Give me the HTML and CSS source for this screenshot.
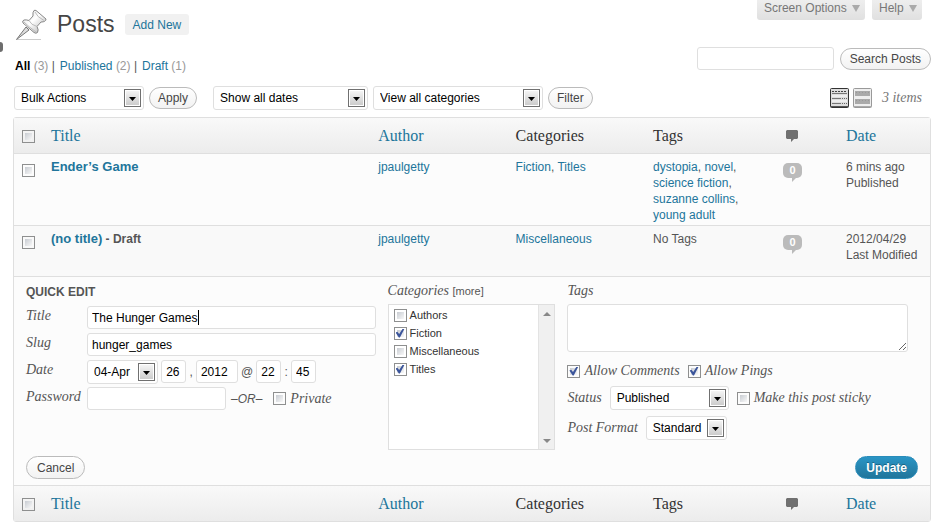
FILE: index.html
```html
<!DOCTYPE html>
<html lang="en">

<head>
  <meta charset="UTF-8">
  <title>Posts</title>
  <link rel="stylesheet" href="styles.css">
</head>

<body>
  <span class="menu-arrow"></span>

  <header class="page-header">
    <svg class="pin" viewBox="0 0 32 32" aria-hidden="true">
      <defs>
        <linearGradient id="pin-fill" x1="0" y1="0" x2="1" y2="1">
          <stop offset="0" stop-color="#ddd" />
          <stop offset="0.45" stop-color="#fff" />
          <stop offset="1" stop-color="#aaa" />
        </linearGradient>
      </defs>
      <path d="M2 31.5 H26" stroke="#ccc" />
      <path d="M11 19 L1.5 31.5 L14 22 Z" fill="#ddd" stroke="#777" />
      <path d="M21 2.5 L31 11 Q31 14 26 14 L22 18.5 Q24 22 22.5 24.5 Q21 26 19 24.5 L8 15 Q7 12.5 9 12 Q11 11.5 14 12.5 L18 8 Q17.5 4 19 2.5 Q20 2 21 2.5 Z" fill="url(#pin-fill)" stroke="#888" />
      <path d="M20 4 Q22 9 29 12.5 M14 12.5 Q16 17 22 18.5 M9 14 Q14 19 21 24" fill="none" stroke="#bbb" />
    </svg>
    <h1>Posts</h1>
    <a class="add-new" href="#">Add New</a>
    <div class="screen-links">
      <button type="button">Screen Options <span class="down"></span></button>
      <button type="button">Help <span class="down"></span></button>
    </div>
  </header>

  <main>
    <div class="top-row">
      <ul class="filters">
        <li><a class="current" href="#">All</a> <span class="count">(3)</span> |</li>
        <li><a href="#">Published</a> <span class="count">(2)</span> |</li>
        <li><a href="#">Draft</a> <span class="count">(1)</span></li>
      </ul>
      <form class="search">
        <input type="text" aria-label="Search Posts">
        <button class="button" type="button">Search Posts</button>
      </form>
    </div>

    <div class="toolbar">
      <div class="group">
        <select class="bulk" aria-label="Bulk Actions">
          <option>Bulk Actions</option>
        </select>
        <button class="button" type="button">Apply</button>
      </div>
      <div class="group">
        <select class="dates" aria-label="Dates">
          <option>Show all dates</option>
        </select>
        <select class="cats" aria-label="Categories">
          <option>View all categories</option>
        </select>
        <button class="button" type="button">Filter</button>
      </div>
      <div class="view">
        <a href="#" aria-label="List view">
          <svg width="19" height="20" viewBox="0 0 19 20">
            <rect x="0.5" y="0.5" width="18" height="19" rx="1" fill="#ddd" stroke="#333" />
            <path d="M2 3.5 H17" stroke="#444" stroke-dasharray="2 1" />
            <path d="M2 5.5 H17 M2 10.5 H11 M2 15.5 H11" stroke="#777" />
            <path d="M2 8 H17 M2 13 H17" stroke="#eee" stroke-width="2" />
            <path d="M12 10.5 H17 M12 15.5 H17" stroke="#666" stroke-dasharray="1 1" />
            <path d="M1 18.5 H18" stroke="#555" />
          </svg>
        </a>
        <a href="#" aria-label="Excerpt view">
          <svg width="19" height="20" viewBox="0 0 19 20">
            <rect x="0.5" y="0.5" width="18" height="19" rx="1" fill="#eee" stroke="#999" />
            <path d="M2 5.5 H17 M2 13.5 H17" stroke="#aaa" stroke-width="5" />
            <path d="M3 4.5 H16 M3 12.5 H16" stroke="#999" stroke-dasharray="1 2" />
            <path d="M1 18.5 H18" stroke="#aaa" />
          </svg>
        </a>
        <span class="total">3 items</span>
      </div>
    </div>

    <table class="posts">
      <colgroup>
        <col class="col-check">
        <col>
        <col class="col-wide">
        <col class="col-wide">
        <col class="col-tags">
        <col class="col-comments">
        <col class="col-date">
      </colgroup>
      <thead>
        <tr>
          <th class="check"><input type="checkbox" aria-label="Select all"></th>
          <th><a href="#">Title</a></th>
          <th><a href="#">Author</a></th>
          <th>Categories</th>
          <th>Tags</th>
          <th class="comments">
            <svg width="12" height="12" viewBox="0 0 12 12" role="img" aria-label="Comments">
              <path d="M1 0 H11 L12 1 V8 L11 9 H8 L5 12 V9 H1 L0 8 V1 Z" fill="#707070" />
            </svg>
          </th>
          <th><a href="#">Date</a></th>
        </tr>
      </thead>
      <tbody>
        <tr>
          <td class="check"><input type="checkbox" aria-label="Select Ender’s Game"></td>
          <td class="title"><a href="#">Ender’s Game</a></td>
          <td><a href="#">jpaulgetty</a></td>
          <td><a href="#">Fiction</a>, <a href="#">Titles</a></td>
          <td><a href="#">dystopia</a>, <a href="#">novel</a>, <a href="#">science fiction</a>, <a href="#">suzanne collins</a>, <a href="#">young adult</a></td>
          <td><a class="bubble" href="#">0</a></td>
          <td>6 mins ago<br>Published</td>
        </tr>
        <tr class="alt">
          <td class="check"><input type="checkbox" aria-label="Select (no title)"></td>
          <td class="title"><a href="#">(no title)</a> <b>- Draft</b></td>
          <td><a href="#">jpaulgetty</a></td>
          <td><a href="#">Miscellaneous</a></td>
          <td>No Tags</td>
          <td><a class="bubble" href="#">0</a></td>
          <td>2012/04/29<br>Last Modified</td>
        </tr>
        <tr>
          <td class="edit-cell" colspan="7">
            <form class="quick-edit">
              <div class="edit-columns">
                <div class="edit-main">
                  <h2>QUICK EDIT</h2>
                  <div class="field">
                    <label for="title">Title</label>
                    <input class="grow caret" id="title" type="text" value="The Hunger Games">
                  </div>
                  <div class="field">
                    <label for="slug">Slug</label>
                    <input class="grow" id="slug" type="text" value="hunger_games">
                  </div>
                  <div class="field">
                    <label for="month">Date</label>
                    <div class="date">
                      <select id="month">
                        <option>04-Apr</option>
                      </select>
                      <span><input class="two" type="text" value="26" aria-label="Day"> ,</span>
                      <input class="four" type="text" value="2012" aria-label="Year">
                      <span>@</span>
                      <input class="two" type="text" value="22" aria-label="Hour">
                      <span>:</span>
                      <input class="two" type="text" value="45" aria-label="Minute">
                    </div>
                  </div>
                  <div class="field">
                    <label for="password">Password</label>
                    <input class="password" id="password" type="text">
                    <em>–OR–</em>
                    <label class="tick"><input type="checkbox"> Private</label>
                  </div>
                </div>

                <div class="edit-categories">
                  <h3>Categories <a href="#">[more]</a></h3>
                  <div class="list-box">
                    <ul>
                      <li><label><input type="checkbox"> Authors</label></li>
                      <li><label><input type="checkbox" checked> Fiction</label></li>
                      <li><label><input type="checkbox"> Miscellaneous</label></li>
                      <li><label><input type="checkbox" checked> Titles</label></li>
                    </ul>
                    <div class="scroll">
                      <span class="up"></span>
                      <span class="down"></span>
                    </div>
                  </div>
                </div>

                <div class="edit-options">
                  <h3><label for="tags">Tags</label></h3>
                  <textarea id="tags"></textarea>
                  <div class="options allow">
                    <label class="tick"><input type="checkbox" checked> Allow Comments</label>
                    <label class="tick"><input type="checkbox" checked> Allow Pings</label>
                  </div>
                  <div class="options">
                    <label for="status">Status</label>
                    <select class="status" id="status">
                      <option>Published</option>
                    </select>
                    <label class="tick"><input type="checkbox"> Make this post sticky</label>
                  </div>
                  <div class="options">
                    <label for="format">Post Format</label>
                    <select class="format" id="format">
                      <option>Standard</option>
                    </select>
                  </div>
                </div>
              </div>
              <div class="actions">
                <button class="button" type="button">Cancel</button>
                <button class="button primary" type="button">Update</button>
              </div>
            </form>
          </td>
        </tr>
      </tbody>
      <tfoot>
        <tr>
          <th class="check"><input type="checkbox" aria-label="Select all"></th>
          <th><a href="#">Title</a></th>
          <th><a href="#">Author</a></th>
          <th>Categories</th>
          <th>Tags</th>
          <th class="comments">
            <svg width="12" height="12" viewBox="0 0 12 12" role="img" aria-label="Comments">
              <path d="M1 0 H11 L12 1 V8 L11 9 H8 L5 12 V9 H1 L0 8 V1 Z" fill="#707070" />
            </svg>
          </th>
          <th><a href="#">Date</a></th>
        </tr>
      </tfoot>
    </table>
  </main>
</body>

</html>
```
FILE: styles.css
```css
* {
  box-sizing: border-box;
}

body {
  margin: 0;
  background: #fff;
  color: #555;
  font: 12px/16px "Liberation Sans", Arial, sans-serif;
}

a {
  color: #21759b;
  text-decoration: none;
}

ul {
  list-style: none;
  margin: 0;
  padding: 0;
}

main {
  padding: 0 13px;
}

/* form controls */

input,
select,
textarea,
button {
  font: inherit;
  margin: 0;
}

input[type="text"],
select,
textarea {
  height: 24px;
  border: 1px solid #dfdfdf;
  border-radius: 3px;
  background: #fff;
  color: #000;
  padding: 0 4px;
}

input[type="text"] {
  height: 23px;
}

select {
  appearance: none;
  padding: 0 24px 0 6px;
  background: #fff url("data:image/svg+xml,%3Csvg xmlns='http://www.w3.org/2000/svg' width='17' height='18'%3E%3ClinearGradient id='g' x2='0' y2='1'%3E%3Cstop stop-color='%23f4f4f4'/%3E%3Cstop offset='1' stop-color='%23ccc'/%3E%3C/linearGradient%3E%3Crect x='.5' y='.5' width='16' height='17' fill='%23fff' stroke='%23707070'/%3E%3Crect x='2' y='2' width='13' height='14' fill='url(%23g)'/%3E%3Cpath d='M5 8H12L8.5 12Z'/%3E%3C/svg%3E") no-repeat right 2px center;
}

textarea {
  display: block;
  width: 100%;
  height: 48px;
}

input[type="checkbox"] {
  appearance: none;
  display: inline-grid;
  place-content: center;
  flex: none;
  width: 13px;
  height: 13px;
  border: 1px solid #8e8f8f;
  background: linear-gradient(135deg, #c8ccd2, #f8f8f8) content-box #f4f4f4;
  padding: 2px;
}

input[type="checkbox"]:checked::before {
  content: "";
  width: 9px;
  height: 9px;
  background: #3b559b;
  clip-path: polygon(0 45%, 20% 35%, 40% 62%, 80% 0, 100% 0, 48% 100%, 36% 100%);
}

.button {
  height: 22px;
  border: 1px solid #bbb;
  border-radius: 11px;
  background: linear-gradient(#fff, #f2f2f2);
  color: #464646;
  padding: 0 8px;
  white-space: nowrap;
}

.primary {
  border-color: #298cba;
  background: linear-gradient(#2a95c5, #21759b);
  color: #fff;
  font-weight: bold;
  text-shadow: 0 -1px 0 rgba(0, 0, 0, 0.3);
}

.down,
.up {
  display: inline-block;
  border: 4px solid transparent;
  border-top: 7px solid #aaa;
  border-bottom: 0;
}

.up {
  border-top: 0;
  border-bottom: 4px solid #888;
}

/* header */

.menu-arrow {
  position: absolute;
  top: 42px;
  left: 0;
  width: 3px;
  height: 10px;
  border-radius: 0 5px 5px 0;
  background: #6d6d6d;
}

.page-header {
  display: flex;
  align-items: center;
  height: 44px;
  padding: 4px 22px 0 15px;
}

.pin {
  width: 32px;
  height: 32px;
}

h1 {
  margin: 0 10px;
  color: #464646;
  font-size: 23px;
  font-weight: normal;
  line-height: 32px;
}

.add-new {
  border-radius: 3px;
  background: #f1f1f1;
  padding: 3px 8px 2px;
}

.screen-links {
  display: flex;
  gap: 7px;
  align-self: flex-start;
  margin: -4px 0 0 auto;
}

.screen-links button {
  height: 20px;
  border: 0;
  border-radius: 0 0 3px 3px;
  background: linear-gradient(#eee, #e0e0e0);
  color: #777;
  padding: 0 5px 4px 7px;
}

.screen-links .down {
  margin-left: 2px;
}

/* filters and search */

.top-row {
  display: flex;
  justify-content: space-between;
  align-items: flex-end;
  padding-top: 3px;
}

.filters {
  display: flex;
  gap: 5px;
  padding: 0 2px;
}

.filters .current {
  color: #000;
  font-weight: bold;
}

.count {
  color: #999;
}

.search {
  display: flex;
  align-items: center;
  gap: 6px;
  margin-bottom: 4px;
}

.search input {
  width: 137px;
}

.search .button {
  padding: 0 9px;
}

.toolbar {
  display: flex;
  align-items: center;
  gap: 16px;
  padding: 12px 0 7px 1px;
}

.group {
  display: flex;
  align-items: center;
  gap: 5px;
}

.bulk {
  width: 130px;
}

.dates {
  width: 155px;
}

.cats {
  width: 170px;
}

.view {
  display: flex;
  align-items: center;
  gap: 4px;
  margin: 0 9px 0 auto;
}

.view svg {
  display: block;
}

.total {
  margin-left: 6px;
  color: #777;
  font: italic 14px/20px "Liberation Serif", Georgia, serif;
}

/* posts table */

.posts {
  width: 100%;
  table-layout: fixed;
  border: 1px solid #dfdfdf;
  border-radius: 3px;
  border-spacing: 0;
  background: #fcfcfc;
}

.col-check {
  width: 30px;
}

.col-wide {
  width: 15%;
}

.col-tags {
  width: 130px;
}

.col-comments {
  width: 63px;
}

.col-date {
  width: 91px;
}

.posts th {
  height: 36px;
  background: linear-gradient(#f9f9f9, #ececec);
  color: #333;
  font: 16px/20px "Liberation Serif", Georgia, serif;
  text-align: left;
  padding: 0 7px;
}

.posts tfoot th {
  height: 35px;
}

.posts th a {
  color: #21759b;
}

.posts thead th,
.posts td {
  border-bottom: 1px solid #dfdfdf;
}

.posts td {
  vertical-align: top;
  padding: 5px 7px 2px;
}

.posts .alt td {
  height: 51px;
  background: #f9f9f9;
}

.posts .check {
  padding: 0 0 0 8px;
}

.posts th.check input {
  display: grid;
  margin-top: 2px;
}

.posts td.check input {
  display: grid;
  margin-top: 10px;
}

.posts .comments {
  padding-left: 10px;
}

.comments svg {
  display: block;
}

.title a {
  font-size: 13px;
  font-weight: bold;
}

.bubble {
  position: relative;
  display: block;
  width: 19px;
  height: 15px;
  margin-top: 4px;
  border-radius: 5px;
  background: #bbb;
  color: #fff;
  font-size: 11px;
  font-weight: bold;
  line-height: 15px;
  text-align: center;
}

/* tail of the comment bubble */
.bubble::after {
  content: "";
  position: absolute;
  top: 15px;
  left: 9px;
  border-top: 4px solid #bbb;
  border-right: 4px solid transparent;
}

/* quick edit */

.posts .edit-cell {
  padding: 6px 12px;
}

.edit-columns {
  display: grid;
  grid-template-columns: 350fr 168fr 341fr;
  gap: 12px;
  padding-right: 10px;
}

.quick-edit h2 {
  margin: 0 0 5px;
  font-size: 12px;
  line-height: 18px;
}

.quick-edit h3 {
  margin: 0 0 5px;
  font-weight: normal;
  line-height: 16px;
}

.quick-edit h3,
.quick-edit label {
  font-family: "Liberation Serif", Georgia, serif;
  font-size: 14px;
  font-style: italic;
}

.quick-edit h3 a {
  color: #555;
  font: 11px/16px "Liberation Sans", Arial, sans-serif;
}

.field {
  display: flex;
  align-items: center;
  margin-bottom: 4px;
}

.field > label:first-child {
  width: 61px;
  flex: none;
  padding-bottom: 4px;
}

.grow {
  flex: 1;
  min-width: 0;
}

/* text cursor at the end of the title */
input.caret[type="text"] {
  background: linear-gradient(#000, #000) 110px center / 1px 15px no-repeat #fff;
}

.date {
  display: flex;
  justify-content: space-between;
  align-items: center;
  width: 229px;
  height: 23px;
}

.date select {
  width: 71px;
}

.two {
  width: 25px;
}

.four {
  width: 42px;
}

.password {
  width: 139px;
}

.field em {
  margin: 0 11px 0 5px;
}

.quick-edit .tick {
  display: flex;
  align-items: center;
  gap: 4px;
  white-space: nowrap;
}

.list-box {
  display: flex;
  height: 146px;
  border: 1px solid #dfdfdf;
  background: #fff;
}

.list-box ul {
  flex: 1;
  padding: 1px 5px;
}

.list-box label {
  display: flex;
  align-items: center;
  gap: 3px;
  color: #333;
  font: 11px/18px "Liberation Sans", Arial, sans-serif;
}

.scroll {
  display: flex;
  flex-direction: column;
  justify-content: space-between;
  align-items: center;
  width: 16px;
  border-left: 1px solid #e3e3e3;
  background: #f0f0f0;
  padding: 7px 0 6px;
}

.scroll .down {
  border-top: 4px solid #888;
}

.options {
  display: flex;
  align-items: center;
  gap: 8px;
  margin-bottom: 6px;
}

.allow {
  margin: 11px 0 7px;
}

.status {
  width: 119px;
}

.format {
  width: 81px;
}

.actions {
  display: flex;
  justify-content: space-between;
  margin-top: 6px;
}

.actions .button {
  height: 23px;
  border-radius: 12px;
  padding: 0 10px;
}
```
